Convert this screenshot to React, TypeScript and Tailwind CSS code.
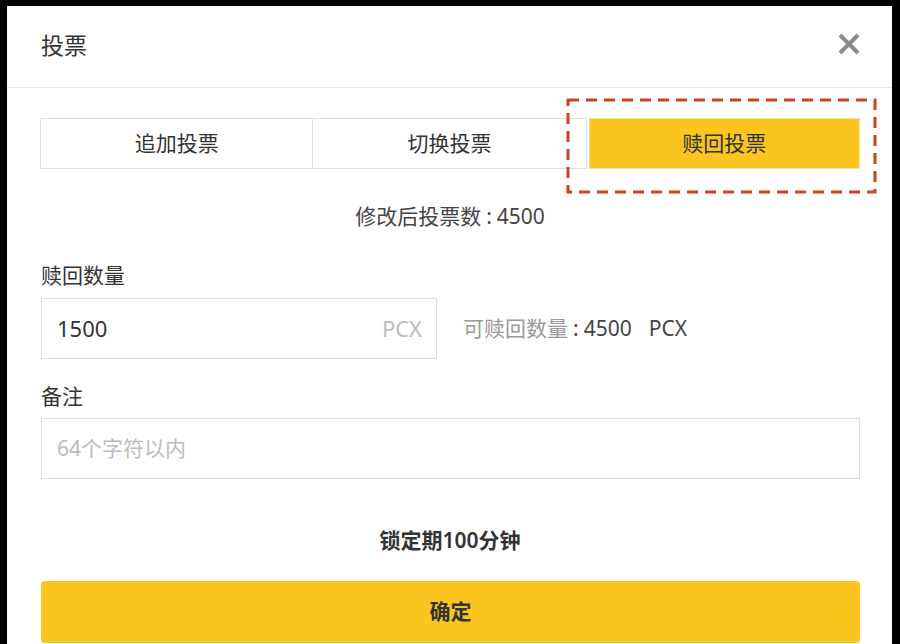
import React from "react";

const FONT = "font-['Noto_Sans','Noto_Sans_CJK_SC',sans-serif]";

export default function App() {
  return (
    <div className={`relative h-[644px] w-[900px] overflow-hidden bg-black pl-[7px] pr-[8px] pt-[6px] ${FONT}`}>
      <div className="flex h-[638px] flex-col bg-white">
        {/* Header */}
        <div className="flex h-[82px] shrink-0 items-center justify-between border-b border-[#e6e6e6] pl-[34px] pr-[31px]">
          <span className="-mt-[4px] text-[23px] leading-[30px] text-[#333]">投票</span>
          <svg width="24" height="24" viewBox="0 0 24 24" className="-mt-[6px]">
            <path d="M3 3 L21 21 M21 3 L3 21" stroke="#8a8a8a" strokeWidth="4" strokeLinecap="butt" />
          </svg>
        </div>

        {/* Body */}
        <div className="flex flex-col pl-[33px] pr-[32px] pt-[30px]">
          <div className="grid h-[51px] grid-cols-3">
            <div className="flex items-center justify-center border border-[#e0e0e0] text-[21px] text-[#333]">追加投票</div>
            <div className="flex items-center justify-center border-y border-r border-[#e0e0e0] text-[21px] text-[#333]">切换投票</div>
            <div className="ml-[2px] flex items-center justify-center border border-[#f3e2a8] bg-[#fcc41e] text-[21px] text-[#333]">赎回投票</div>
          </div>

          <div className="mt-[32px] text-center text-[21px] leading-[30px] text-[#444]">
            修改后投票数<span className="mx-[5px]">:</span>4500
          </div>

          <div className="mt-[29px] pl-[1px] text-[21px] leading-[30px] text-[#333]">赎回数量</div>
          <div className="mt-[8px] flex items-center pl-[1px]">
            <div className="flex h-[61px] w-[396px] items-center justify-between border border-[#dedede] pl-[15px] pr-[14px]">
              <span className="text-[22px] text-[#333]">1500</span>
              <span className="text-[22px] text-[#bbbbbb]">PCX</span>
            </div>
            <div className="ml-[26px] flex items-center text-[21px] text-[#444]">
              <span className="text-[#999]">可赎回数量</span>
              <span className="mx-[5px]">:</span>
              <span>4500</span>
              <span className="ml-[17px]">PCX</span>
            </div>
          </div>

          <div className="mt-[22px] pl-[1px] text-[21px] leading-[30px] text-[#333]">备注</div>
          <div className="ml-[1px] mt-[7px] flex h-[61px] items-center border border-[#dedede] pl-[15px]">
            <span className="text-[21px] text-[#bbbbbb]">64个字符以内</span>
          </div>

          <div className="mt-[46px] text-center text-[21px] font-semibold leading-[30px] text-[#333]">锁定期100分钟</div>

          <button className="ml-[1px] mt-[26px] flex h-[62px] items-center justify-center rounded-[4px] bg-[#fcc41e] text-[21px] font-semibold text-[#333]">
            确定
          </button>
        </div>
      </div>

      {/* Annotation overlay */}
      <svg className="absolute left-[566px] top-[98px]" width="311" height="96" viewBox="0 0 311 96">
        <rect x="2" y="2" width="307" height="92" fill="none" stroke="#c7441c" strokeWidth="3" strokeDasharray="11 7" />
      </svg>
    </div>
  );
}
